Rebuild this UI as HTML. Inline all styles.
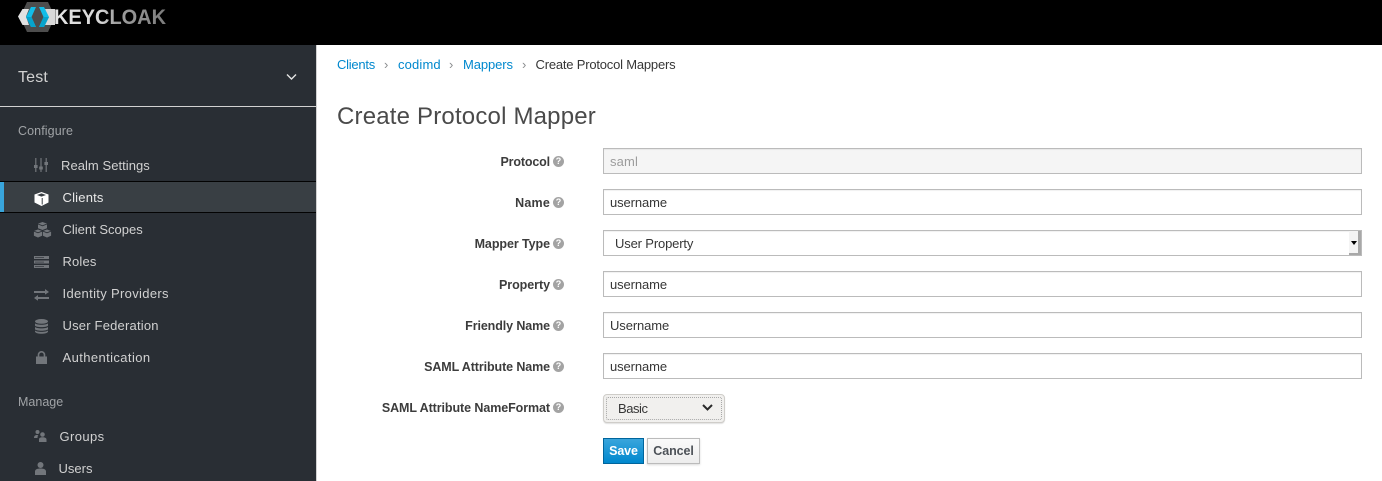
<!DOCTYPE html>
<html><head><meta charset="utf-8"><style>
*{box-sizing:border-box}
html,body{margin:0;padding:0;width:1382px;height:481px;overflow:hidden;background:#fff;font-family:"Liberation Sans",sans-serif;font-size:13px}
.a{position:absolute;white-space:nowrap}
.nav{color:#d1d1d1;line-height:18px}
.h{color:#a0a3a6;line-height:18px;font-size:12.5px}
.ico{position:absolute;fill:#72767b}
.l{position:absolute;right:832px;color:#3c3c3c;font-weight:bold;line-height:18px;white-space:nowrap;font-size:12.5px}
.q{position:absolute;left:553px;width:11px;height:11px;border-radius:50%;background:#a3a3a3;color:#fff;font:bold 9px/11px "Liberation Sans",sans-serif;text-align:center}
.i{position:absolute;left:603px;width:759px;height:26px;border:1px solid #bbb;background:#fff;color:#363636;padding-left:6px;line-height:26px;box-shadow:inset 0 1px 1px rgba(3,3,3,.06)}
.bc{color:#0088ce;line-height:18px}
.sep{color:#8b8d8f;line-height:18px}
</style></head><body>
<div class="a" style="left:0;top:0;width:1382px;height:45px;background:#000"></div>
<svg class="a" style="left:0;top:0" width="60" height="36" viewBox="0 0 60 36">
<polygon points="27,2 48,2 55,17 48,32 27,32 20,17" fill="#4d4d4d"/>
<polygon points="18,16.500 22.500,9 29,9 26,16.500 29,25 22.500,25" fill="#e2e2e2"/>
<polygon points="45,9 55,9 55,25 45,25 48,17" fill="#d8d8d8"/>
<polygon points="31,7 36,7 31.500,17 36,27 31,27 26,17" fill="#12bde8"/>
<polygon points="39,7 44,7 49,17 44,27 39,27 43.500,17" fill="#12bde8"/>
<polygon points="26,17 31.500,17 36,27 31,27" fill="#07a3cc"/>
<polygon points="43.500,17 49,17 44,27 39,27" fill="#07a3cc"/>
</svg>
<svg class="a" style="left:54px;top:3px" width="116" height="28"><defs><linearGradient id="g" x1="0" x2="1" y1="0" y2="0"><stop offset="0" stop-color="#e4e4e4"/><stop offset=".42" stop-color="#d6d6d6"/><stop offset=".55" stop-color="#a0a0a0"/><stop offset="1" stop-color="#7c7c7c"/></linearGradient></defs><text x="0" y="21" fill="url(#g)" font-family="Liberation Sans" font-weight="bold" font-size="21" textLength="112" lengthAdjust="spacingAndGlyphs">KEYCLOAK</text></svg>

<div class="a" style="left:0;top:45px;width:316px;height:436px;background:#292e34"></div>
<div class="a" style="left:316px;top:45px;width:1px;height:436px;background:#d1d1d1"></div>
<div class="a" style="left:0;top:106px;width:316px;height:1px;background:#d1d1d1"></div>
<div class="a" style="left:18px;top:68px;font-size:16px;line-height:20px;color:#d1d1d1;letter-spacing:.15px">Test</div>
<svg class="a" style="left:286px;top:73px" width="11" height="8"><path d="M1 1.500 5.500 6 10 1.500" fill="none" stroke="#e4e4e4" stroke-width="1.400"/></svg>

<div class="a h" style="left:18px;top:122px;letter-spacing:.1px">Configure</div>
<div class="a nav" style="left:61px;top:157px;letter-spacing:.05px">Realm Settings</div>
<div class="a" style="left:0;top:181px;width:316px;height:32px;background:#393f44;border-top:1px solid #030303;border-bottom:1px solid #030303"></div>
<div class="a" style="left:0;top:182px;width:4px;height:30px;background:#39a5dc"></div>
<div class="a" style="left:62.500px;top:189px;color:#e8e8e8;letter-spacing:.2px;line-height:18px">Clients</div>
<div class="a nav" style="left:62.500px;top:221px">Client Scopes</div>
<div class="a nav" style="left:62.500px;top:253px;letter-spacing:.15px">Roles</div>
<div class="a nav" style="left:62.500px;top:285px;letter-spacing:.33px">Identity Providers</div>
<div class="a nav" style="left:62.500px;top:317px;letter-spacing:.2px">User Federation</div>
<div class="a nav" style="left:62.500px;top:349px;letter-spacing:.4px">Authentication</div>
<div class="a h" style="left:18px;top:393px">Manage</div>
<div class="a nav" style="left:59.500px;top:428px;letter-spacing:.4px">Groups</div>
<div class="a nav" style="left:58.500px;top:460px">Users</div>

<svg class="ico" style="left:34px;top:157px" width="14" height="16" viewBox="0 0 14 16"><path d="M1.200 1h1.200v14H1.200zM6.400 1h1.200v14H6.400zM11.600 1h1.200v14h-1.200z"/><rect x="0" y="8" width="3.600" height="3"/><rect x="5.200" y="9.500" width="3.600" height="3"/><rect x="10.400" y="5" width="3.600" height="3"/></svg>
<svg class="a" style="left:34px;top:192px" width="15" height="14" viewBox="0 0 15 14"><path d="M7.500 0 14.500 2.500v8L7.500 14 .5 10.500v-8z" fill="#fff"/><path d="M7.500 1.400 12 3 7.500 4.600 3 3z" fill="#393f44"/><path d="M8.200 6v6.500" stroke="#393f44" stroke-width="1" fill="none"/></svg>
<svg class="ico" style="left:33px;top:222px" width="19" height="16" viewBox="0 0 19 16"><path d="M9.500 0 14 1.600v4.600L9.500 8 5 6.200V1.600z"/><path d="M5 7 9.500 8.800v5.200L5 16 .5 14V8.800zM14 7 18.500 8.800V14L14 16 9.500 14V8.800z" stroke="#292e34" stroke-width=".8"/><path d="M.5 9 5 10.800 9.500 9M9.500 9 14 10.800 18.500 9M5 2 9.500 3.800 14 2" fill="none" stroke="#292e34" stroke-width=".8"/></svg>
<svg class="ico" style="left:34px;top:256px" width="15" height="12" viewBox="0 0 15 12"><path d="M0 0h15v3H0zM0 4.500h15v3H0zM0 9h15v3H0z"/><path d="M1 1.200h9v.7H1zM1 5.700h9v.7H1zM1 10.200h9v.7H1z" fill="#292e34"/></svg>
<svg class="ico" style="left:34px;top:289px" width="15" height="12" viewBox="0 0 15 12"><path d="M0 2h11V0l4 3-4 2.600V4H0zM15 8H4V6L0 9l4 2.800V10h11z"/></svg>
<svg class="ico" style="left:35px;top:319px" width="13" height="15" viewBox="0 0 13 15"><ellipse cx="6.500" cy="2.400" rx="6.500" ry="2.400"/><path d="M0 4.200c1 2 12 2 13 0v2.400c-1 2-12 2-13 0zM0 7.900c1 2 12 2 13 0v2.400c-1 2-12 2-13 0zM0 11.400c1 2 12 2 13 0v1.200C12 15.500 1 15.500 0 12.600z"/></svg>
<svg class="ico" style="left:36px;top:351px" width="11" height="13" viewBox="0 0 11 13"><path d="M0 5.500h1.700V3.800a3.800 3.800 0 0 1 7.600 0v1.700H11V13H0zM3.300 5.500h4.400V3.800a2.200 2.200 0 0 0-4.400 0z"/></svg>
<svg class="ico" style="left:34px;top:430px" width="13" height="12" viewBox="0 0 13 12"><circle cx="3.500" cy="2" r="2"/><circle cx="8.500" cy="4.500" r="2.300"/><path d="M0 8c0-2 1-3 3-3 .5 0 1 .2 1.300.4-.5.6-.8 1.300-.8 2.600H0zM5 12V9.500c0-1.500 1-2.300 3.500-2.300S12.500 8 12.500 9.500V12z"/></svg>
<svg class="ico" style="left:34px;top:462px" width="13" height="13" viewBox="0 0 13 13"><circle cx="6.500" cy="3" r="3"/><path d="M1 13V9.500C1 7.500 3 6.500 6.500 6.500S12 7.500 12 9.500V13z"/></svg>

<div class="a bc" style="left:337px;top:56px;letter-spacing:-.25px">Clients</div>
<div class="a sep" style="left:384px;top:56px">›</div>
<div class="a bc" style="left:398px;top:56px;letter-spacing:.15px">codimd</div>
<div class="a sep" style="left:449px;top:56px">›</div>
<div class="a bc" style="left:463px;top:56px;letter-spacing:-.1px">Mappers</div>
<div class="a sep" style="left:522px;top:56px">›</div>
<div class="a" style="left:535.500px;top:56px;color:#363636;letter-spacing:-.2px;line-height:18px">Create Protocol Mappers</div>
<div class="a" style="left:337px;top:102px;font-size:24px;line-height:30px;color:#4a4a4a;letter-spacing:.19px">Create Protocol Mapper</div>

<div class="l" style="top:153px;letter-spacing:-.15px">Protocol</div><div class="q" style="top:156px">?</div>
<div class="l" style="top:194px;letter-spacing:.2px">Name</div><div class="q" style="top:197px">?</div>
<div class="l" style="top:235px;letter-spacing:-.07px">Mapper Type</div><div class="q" style="top:238px">?</div>
<div class="l" style="top:276px;letter-spacing:-.05px">Property</div><div class="q" style="top:279px">?</div>
<div class="l" style="top:317px;letter-spacing:-.1px">Friendly Name</div><div class="q" style="top:320px">?</div>
<div class="l" style="top:358px;letter-spacing:-.1px">SAML Attribute Name</div><div class="q" style="top:361px">?</div>
<div class="l" style="top:399px;letter-spacing:-.08px">SAML Attribute NameFormat</div><div class="q" style="top:402px">?</div>

<div class="i" style="top:148px;background:#f5f5f5;color:#9c9c9c;letter-spacing:.15px">saml</div>
<div class="i" style="top:189px;letter-spacing:-.1px">username</div>
<div class="i" style="top:230px;padding-left:11px;letter-spacing:-.15px">User Property</div>
<div class="a" style="left:1349px;top:231px;width:12px;height:24px;background:#f4f4f4;border-right:3px solid #a8a8a8;border-bottom:2px solid #a8a8a8"></div>
<div class="a" style="left:1351px;top:241px;border:3.500px solid transparent;border-top:4px solid #000;border-bottom:0"></div>
<div class="i" style="top:271px;letter-spacing:-.1px">username</div>
<div class="i" style="top:312px;letter-spacing:-.1px">Username</div>
<div class="i" style="top:353px;letter-spacing:-.1px">username</div>

<div class="a" style="left:603px;top:394px;width:122px;height:29px;border:1px solid #cfcdc9;border-radius:4px;background:#f1f0ee;box-shadow:0 1px 1px rgba(0,0,0,.12)"></div>
<div class="a" style="left:606px;top:397px;width:116px;height:23px;border:1px dotted #a8a8a8;border-radius:2px"></div>
<div class="a" style="left:618px;top:400px;color:#363636;letter-spacing:-.45px;line-height:18px">Basic</div>
<svg class="a" style="left:702px;top:404px" width="11" height="8"><path d="M1 1 5.500 5.500 10 1" fill="none" stroke="#2a2a2a" stroke-width="2"/></svg>

<div class="a" style="left:603px;top:438px;width:41px;height:26px;border:1px solid #00659c;background:linear-gradient(#39a5dc,#0088ce);color:#fff;font-weight:bold;font-size:12.500px;letter-spacing:-.1px;text-align:center;line-height:24px">Save</div>
<div class="a" style="left:647px;top:438px;width:53px;height:26px;border:1px solid #bbb;background:linear-gradient(#fafafa,#ededed);color:#4d5258;font-weight:bold;font-size:12.500px;letter-spacing:-.1px;text-align:center;line-height:24px;box-shadow:0 1px 2px rgba(0,0,0,.15)">Cancel</div>
</body></html>
